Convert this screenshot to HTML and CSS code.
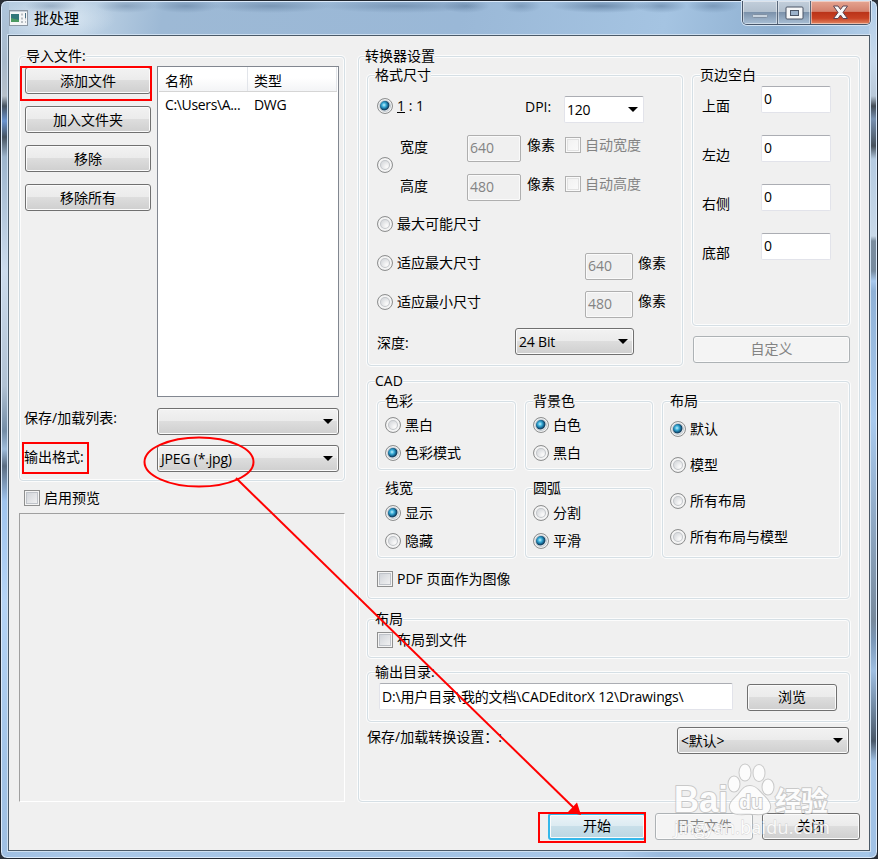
FILE: index.html
```html
<!DOCTYPE html>
<html lang="zh-CN">
  <head>
    <meta charset="UTF-8" />
    <meta name="viewport" content="width=device-width, initial-scale=1.0" />
    <title>批处理</title>

    <link rel="stylesheet" href="styles.css">
  </head>

  <body>
    <div class="window">
      <header class="titlebar">
        <svg class="app-icon" width="19" height="17" viewBox="0 0 19 17">
          <rect x="0.5" y="0.5" width="18" height="15" fill="#f4f6f7" stroke="#8b97a3" />
          <path d="M1 1.5h17" stroke="#c7d0d9" />
          <rect x="2" y="4" width="8" height="8" fill="#31777a" />
          <path d="M2 12V8l8 2v2z" fill="#4c9a62" />
          <path d="M12 4.5h2M12 8.5h2M12 12h2M16 8.5h1M16 12h1" stroke="#b9bfc4" stroke-width="2" />
          <path d="M16.500 3v5" stroke="#4a7184" />
        </svg>
        <h1 class="title">批处理</h1>
        <div class="controls">
          <span class="control min">
            <svg width="18" height="8"><rect x="1.500" y="1.500" width="15" height="3" rx="1" fill="#c8d3de" stroke="#8090a3" /></svg>
          </span>
          <span class="control max">
            <svg width="19" height="14"><rect x="1" y="1" width="17" height="12" rx="1" fill="#f5f6f7" stroke="#4b5566" /><rect x="5.500" y="4.500" width="8" height="5" fill="#9cb2cb" stroke="#4b5566" /></svg>
          </span>
          <span class="control close">
            <svg width="17" height="15" viewBox="0 0 17 15"><path d="M1.500 1h4.500l2.500 3.500L11 1h4.500L11 7.500l4.500 6H11L8.500 10 6 13.500H1.500L6 7.500z" fill="#f7f7f7" stroke="#5c4350" /></svg>
          </span>
        </div>
      </header>

      <main class="client">
        <div class="columns">
          <div class="left">
            <section class="group import">
              <h2 class="legend">导入文件:</h2>
              <div class="files">
                <div class="file-buttons">
                  <button class="btn">添加文件</button>
                  <button class="btn">加入文件夹</button>
                  <button class="btn">移除</button>
                  <button class="btn">移除所有</button>
                </div>
                <div class="list">
                  <div class="list-head"><span class="name">名称</span><span class="type">类型</span></div>
                  <div class="list-row"><span class="name">C:\Users\A...</span><span class="type">DWG</span></div>
                </div>
              </div>
              <div class="row list-preset">
                <span class="label">保存/加载列表:</span>
                <div class="combo"></div>
              </div>
              <div class="row out-format">
                <span class="label">输出格式:</span>
                <div class="combo">JPEG (*.jpg)</div>
              </div>
            </section>
            <label class="check preview-toggle"><input type="checkbox" />启用预览</label>
            <div class="preview"></div>
          </div>

          <section class="group settings">
            <h2 class="legend">转换器设置</h2>
            <div class="top">
              <section class="group format">
                <h3 class="legend">格式尺寸</h3>
                <div class="row dpi-row">
                  <label class="check"><input type="radio" name="size" checked /><span><u>1</u> : 1</span></label>
                  <span class="dpi">DPI:</span>
                  <div class="combo edit">120</div>
                </div>
                <div class="custom">
                  <input type="radio" name="size" />
                  <div class="custom-rows">
                    <div class="row">
                      <span class="label">宽度</span>
                      <input class="field" type="text" value="640" disabled />
                      <span class="unit">像素</span>
                      <label class="check disabled"><input type="checkbox" disabled />自动宽度</label>
                    </div>
                    <div class="row">
                      <span class="label">高度</span>
                      <input class="field" type="text" value="480" disabled />
                      <span class="unit">像素</span>
                      <label class="check disabled"><input type="checkbox" disabled />自动高度</label>
                    </div>
                  </div>
                </div>
                <div class="row max-row">
                  <label class="check"><input type="radio" name="size" />最大可能尺寸</label>
                </div>
                <div class="row fit-row fit-max">
                  <label class="check"><input type="radio" name="size" />适应最大尺寸</label>
                  <input class="field" type="text" value="640" disabled />
                  <span class="unit">像素</span>
                </div>
                <div class="row fit-row fit-min">
                  <label class="check"><input type="radio" name="size" />适应最小尺寸</label>
                  <input class="field" type="text" value="480" disabled />
                  <span class="unit">像素</span>
                </div>
                <div class="row depth-row">
                  <span class="label">深度:</span>
                  <div class="combo">24 Bit</div>
                </div>
              </section>

              <div class="side">
                <section class="group margins">
                  <h3 class="legend">页边空白</h3>
                  <div class="margin-row"><span>上面</span><input class="field" type="text" value="0" /></div>
                  <div class="margin-row"><span>左边</span><input class="field" type="text" value="0" /></div>
                  <div class="margin-row"><span>右侧</span><input class="field" type="text" value="0" /></div>
                  <div class="margin-row"><span>底部</span><input class="field" type="text" value="0" /></div>
                </section>
                <button class="btn custom-btn" disabled>自定义</button>
              </div>
            </div>

            <section class="group cad">
              <h3 class="legend">CAD</h3>
              <div class="cad-grid">
                <div class="group options">
                  <h4 class="legend">色彩</h4>
                  <label class="check"><input type="radio" name="color" />黑白</label>
                  <label class="check"><input type="radio" name="color" checked />色彩模式</label>
                </div>
                <div class="group options">
                  <h4 class="legend">背景色</h4>
                  <label class="check"><input type="radio" name="back" checked />白色</label>
                  <label class="check"><input type="radio" name="back" />黑白</label>
                </div>
                <div class="group options layouts">
                  <h4 class="legend">布局</h4>
                  <label class="check"><input type="radio" name="layout" checked />默认</label>
                  <label class="check"><input type="radio" name="layout" />模型</label>
                  <label class="check"><input type="radio" name="layout" />所有布局</label>
                  <label class="check"><input type="radio" name="layout" />所有布局与模型</label>
                </div>
                <div class="group options lower">
                  <h4 class="legend">线宽</h4>
                  <label class="check"><input type="radio" name="line" checked />显示</label>
                  <label class="check"><input type="radio" name="line" />隐藏</label>
                </div>
                <div class="group options lower">
                  <h4 class="legend">圆弧</h4>
                  <label class="check"><input type="radio" name="arc" />分割</label>
                  <label class="check"><input type="radio" name="arc" checked />平滑</label>
                </div>
              </div>
              <label class="check pdf"><input type="checkbox" />PDF 页面作为图像</label>
            </section>

            <section class="group to-file">
              <h3 class="legend">布局</h3>
              <label class="check"><input type="checkbox" />布局到文件</label>
            </section>

            <section class="group output">
              <h3 class="legend">输出目录:</h3>
              <input class="field path" type="text" value="D:\用户目录\我的文档\CADEditorX 12\Drawings\" />
              <button class="btn browse">浏览</button>
            </section>

            <div class="row preset">
              <span class="label">保存/加载转换设置：:</span>
              <div class="combo">&lt;默认&gt;</div>
            </div>
          </section>
        </div>

        <footer class="actions">
          <button class="btn start">开始</button>
          <button class="btn" disabled>日志文件</button>
          <button class="btn">关闭</button>
        </footer>
      </main>

      <!-- watermark -->
      <svg class="watermark" width="170" height="80" viewBox="0 0 170 80">
        <g fill="#fff" stroke="#c0c0c0" stroke-width="2" stroke-linejoin="round" paint-order="stroke">
          <text class="brand" x="4" y="52" font-size="36" textLength="54" lengthAdjust="spacingAndGlyphs">Bai</text>
          <ellipse cx="64" cy="24" rx="5.500" ry="7.500" />
          <ellipse cx="75" cy="12.500" rx="5.500" ry="8" />
          <ellipse cx="89" cy="13" rx="5.500" ry="8" />
          <ellipse cx="98" cy="27" rx="5.500" ry="7.500" />
          <path d="M80 26c6 0 9 5 13 9 4 4 8 8 7 13-2 8-11 6-20 6s-19 2-20-6c-1-5 4-9 8-13 4-5 6-9 12-9z" />
          <text class="cn" x="105" y="51" font-size="27" textLength="53">经验</text>
          <text class="du" x="69" y="49" font-size="20" textLength="24" lengthAdjust="spacingAndGlyphs">du</text>
        </g>
        <text class="url" x="4" y="74" font-size="18" textLength="156">jingyan.baidu.com</text>
      </svg>

      <!-- red marks -->
      <svg class="marks" width="878" height="859" viewBox="0 0 878 859">
        <g fill="none" stroke="#f00" stroke-width="2">
          <rect x="21" y="67" width="130" height="33" />
          <rect x="23" y="443" width="65" height="30" />
          <ellipse cx="199" cy="462" rx="54.500" ry="24.500" />
          <path d="M236 478L575 809" />
          <rect x="539" y="813" width="106" height="29" />
        </g>
        <path d="M581 815L577 802.500L568 812z" fill="#f00" />
      </svg>
    </div>
  </body>
</html>
```
FILE: styles.css
```css
* {
  margin: 0;
  padding: 0;
  box-sizing: border-box;
}
body {
  background: #2b3038;
  color: #000;
  font: 14px/20px "Open Sans", "Noto Sans CJK SC", sans-serif;
  overflow: hidden;
}
h1, h2, h3, h4, button, input {
  font: inherit;
  letter-spacing: inherit;
  color: inherit;
}

.window {
  position: relative;
  width: 878px;
  height: 859px;
  padding: 0 7px;
  border: 1px solid #20262f;
  border-radius: 7px;
  background:
    linear-gradient(#afc6dd 0, #a7b9cb 60px, #b7c1cb 95px, #465361 105px, #6b94cf 120px, #465361 136px, #9db5cd 156px, #cddced 270px, #b1c2d4 385px, #748da6 430px, #9fbcda 448px, #5b6d82 465px, #9fc4ee 500px, #b5d4f6 600px, #a2c4e8 760px, #9fbfe2) 0 0 / 8px 100% no-repeat,
    linear-gradient(#aecbe8 0, #c9daec 60px, #b9c9d9 95px, #424b55 105px, #7891b0 118px, #46515c 145px, #b5cbe1 158px, #c9d9e9 235px, #7b8d9f 240px, #778b9f 270px, #a8c9ee 280px, #8fb1d6 290px, #a9caee 420px, #77899c 620px, #7b98b8 640px, #9fbfe2 670px, #485768 740px, #a1c2e6 760px, #a1c2e6) 100% 0 / 8px 100% no-repeat,
    linear-gradient(90deg, #9fbfe2, #aac8e8 80px, #a1c2e4 400px, #aac9ea 620px, #9abadd 660px, #a6c8ea) 0 100% / 100% 9px no-repeat,
    radial-gradient(ellipse 26px 7px at 50px 5px, rgba(70, 100, 135, 0.35), transparent),
    radial-gradient(ellipse 30px 7px at 125px 5px, rgba(70, 100, 135, 0.35), transparent),
    radial-gradient(ellipse 34px 7px at 185px 5px, rgba(70, 100, 135, 0.4), transparent),
    radial-gradient(ellipse 60px 7px at 270px 5px, rgba(70, 100, 135, 0.4), transparent),
    radial-gradient(ellipse 80px 7px at 400px 5px, rgba(70, 100, 135, 0.4), transparent),
    radial-gradient(ellipse 24px 7px at 465px 5px, rgba(70, 100, 135, 0.4), transparent),
    radial-gradient(ellipse 20px 7px at 520px 5px, rgba(70, 100, 135, 0.35), transparent),
    radial-gradient(ellipse 50px 7px at 600px 5px, rgba(60, 90, 125, 0.5), transparent),
    radial-gradient(ellipse 26px 7px at 660px 5px, rgba(60, 90, 125, 0.4), transparent),
    radial-gradient(ellipse 26px 7px at 712px 5px, rgba(60, 90, 125, 0.35), transparent),
    radial-gradient(ellipse 60px 20px at 55px 18px, rgba(235, 243, 250, 0.6), transparent),
    linear-gradient(100deg, #b7cce0 0, #c0d4e6 8%, #9db9d5 16%, #9ab8d7 45%, #a5c4e2 65%, #8fb0d1 76%, #adcae6 84%, #b5cfe8);
  box-shadow: inset 0 0 0 1px #dceafa;
}
.titlebar {
  display: flex;
  height: 34px;
}
.app-icon {
  margin: 9px 0 0 1px;
}
.title {
  flex: 1;
  margin: 7px 0 0 6px;
  font-size: 15px;
}
.controls {
  display: flex;
  margin-right: -1px;
  height: 24px;
  border: 1px solid #48566a;
  border-top: 0;
  border-radius: 0 0 5px 5px;
  overflow: hidden;
  box-shadow: 0 0 0 1px #d4e3f2;
}
.control {
  display: flex;
  align-items: center;
  justify-content: center;
  width: 35px;
  border-right: 1px solid #58677a;
  background: linear-gradient(#c2cedb, #b1bfcd 48%, #7c92ab 50%, #a9bfd5);
  box-shadow: inset 0 0 0 1px rgba(255, 255, 255, 0.45);
}
.control.min {
  padding-top: 8px;
}
.control.max {
  width: 33px;
}
.control.close {
  width: 59px;
  border: 0;
  background: linear-gradient(#e5a592, #d4826e 45%, #bb3419 50%, #c84123 75%, #e28763);
}

.client {
  width: 862px;
  height: 816px;
  border: 1px solid #4b5a68;
  background: #f0f0f0;
  box-shadow: 0 0 0 1px #cfe0f1;
}
.columns {
  display: flex;
  gap: 13px;
  padding: 20px 0 0 10px;
}
.left {
  width: 326px;
}

.group {
  position: relative;
  border: 1px solid #d5dfe5;
  border-radius: 4px;
  box-shadow: 0 0 0 1px #fcfcfc, inset 0 0 0 1px #fcfcfc;
}
.legend {
  position: absolute;
  top: -11px;
  left: 7px;
  background: #f0f0f0;
  white-space: nowrap;
}

.btn {
  height: 27px;
  padding-bottom: 1px;
  border: 1px solid #707070;
  border-radius: 3px;
  background: linear-gradient(#f2f2f2, #ebebeb 48%, #dddddd 50%, #cfcfcf);
  box-shadow: inset 0 0 0 1px #fbfbfb;
  text-align: center;
}
.btn:disabled {
  border-color: #adb2b5;
  background: #f4f4f4;
  color: #838383;
}
.combo {
  position: relative;
  height: 27px;
  padding-left: 3px;
  border: 1px solid #707070;
  border-radius: 3px;
  background: linear-gradient(#f2f2f2, #ebebeb 48%, #dddddd 50%, #cfcfcf);
  box-shadow: inset 0 0 0 1px #fbfbfb;
  line-height: 26px;
  letter-spacing: -0.2px;
}
.combo::after {
  content: "";
  position: absolute;
  top: 10px;
  right: 5px;
  border: 5px solid transparent;
  border-top-color: #000;
  border-bottom: 0;
}
.field,
.combo.edit {
  height: 27px;
  border: 1px solid #e2e3ea;
  border-top-color: #abadb3;
  border-radius: 2px;
  background: #fff;
  box-shadow: none;
}
.field {
  padding: 0 2px 2px;
}
.field:disabled {
  border-color: #afafaf;
  background: #f0f0f0;
  box-shadow: inset 0 0 0 1px #fafafa;
  color: #838383;
}

input[type="radio"],
input[type="checkbox"] {
  appearance: none;
  flex: none;
  width: 16px;
  height: 16px;
  border: 1px solid #8e8f8f;
}
input[type="checkbox"] {
  background: linear-gradient(135deg, #cbcfd5, #f6f6f6);
  box-shadow: inset 0 0 0 1px #f4f4f4, inset 0 0 0 2px #bfc3c9;
}
input[type="checkbox"]:disabled {
  border-color: #b1b1b1;
  background: linear-gradient(135deg, #f0f0f0, #fbfbfb);
  box-shadow: inset 0 0 0 1px #fafafa, inset 0 0 0 2px #e2e2e2;
}
input[type="radio"] {
  border-radius: 50%;
  background: radial-gradient(circle at 9px 9px, #f8f8f8 1px, #dcdee1 6px);
  box-shadow: inset 0 0 0 2px #f4f4f4, inset 0 0 0 3px #c3c6ca;
}
input[type="radio"]:checked {
  background: radial-gradient(circle at 6px 6px, #c5f0fb 0, #3fb2dc 2px, #14638e 4px, #153b59 5px, transparent 6px), #eef1f3;
  box-shadow: inset 0 0 0 1px #f4f4f4, inset 0 0 0 2px #c3cbd1;
}
.check {
  display: flex;
  align-items: center;
  gap: 4px;
  height: 16px;
  white-space: nowrap;
}
.check.disabled {
  color: #838383;
}
.row {
  display: flex;
}

/* import files */
.import {
  height: 425px;
  padding: 10px 5px 0 5px;
}
.files {
  display: flex;
  gap: 6px;
}
.file-buttons {
  display: flex;
  flex-direction: column;
  gap: 12px;
  width: 126px;
}
.file-buttons .btn {
  padding-bottom: 0;
}
.list {
  width: 182px;
  height: 331px;
  margin-top: -1px;
  border: 1px solid #828790;
  background: #fff;
}
.list-head,
.list-row {
  display: flex;
  margin: 0 1px;
  height: 25px;
  line-height: 27px;
}
.list-row {
  line-height: 25px;
  letter-spacing: -0.35px;
}
.list-head {
  border-bottom: 1px solid #d5d5d5;
  background: linear-gradient(#fff 45%, #f3f4f6);
}
.list .name {
  width: 89px;
  padding-left: 6px;
}
.list .type {
  flex: 1;
  padding-left: 6px;
}
.list-head .name,
.list-head .type {
  border-right: 1px solid #e2e5ea;
}
.list-preset {
  margin-top: 11px;
}
.out-format {
  margin-top: 10px;
}
.import .label {
  width: 132px;
  margin-left: -1px;
}
.out-format .label {
  padding-top: 2px;
}
.import .combo {
  width: 182px;
  margin-left: 1px;
}
.preview-toggle {
  margin: 9px 0 0 5px;
}
.preview {
  height: 289px;
  margin-top: 7px;
  border: 1px solid #fff;
  border-top-color: #a0a0a0;
  border-left-color: #a0a0a0;
}

/* converter settings */
.settings {
  width: 502px;
  height: 746px;
  padding: 18px 9px 0 8px;
}
.settings > .legend,
.import > .legend {
  left: 6px;
}
.top {
  display: flex;
  gap: 9px;
}
.format {
  width: 316px;
  height: 291px;
  padding: 20px 0 0 9px;
}
.dpi-row .check {
  width: 148px;
  margin-top: 2px;
}
.dpi {
  width: 39px;
  margin-top: 1px;
}
.combo.edit {
  width: 80px;
  padding-left: 2px;
  line-height: 25px;
}
.custom {
  display: flex;
  align-items: center;
  gap: 7px;
  margin-top: 12px;
}
.custom > input {
  margin-top: -1px;
}
.custom-rows {
  display: flex;
  flex-direction: column;
  gap: 12px;
}
.custom .label {
  width: 67px;
  padding-top: 2px;
}
.custom .field {
  width: 54px;
}
.custom .unit {
  width: 44px;
  padding-left: 6px;
}
.custom .check {
  margin-top: 2px;
}
.custom > input {
  margin-top: -7px;
}
.max-row {
  margin-top: 15px;
}
.fit-row .check {
  width: 208px;
  margin-top: 2px;
}
.fit-row .field {
  width: 48px;
}
.fit-row .unit {
  padding-left: 5px;
}
.fit-max {
  margin-top: 21px;
}
.fit-min {
  margin-top: 11px;
}
.fit-min .check {
  margin-top: 3px;
}
.depth-row {
  margin-top: 10px;
}
.depth-row .label {
  width: 138px;
  padding-top: 5px;
}
.depth-row .combo {
  width: 119px;
}
.side {
  width: 158px;
}
.margins {
  height: 251px;
  padding: 10px 0 0 9px;
}
.margin-row {
  display: flex;
  height: 49px;
}
.margin-row span {
  width: 59px;
  padding-top: 10px;
}
.margin-row .field {
  width: 70px;
}
.custom-btn {
  width: 157px;
  height: 27px;
  margin: 10px 0 0 1px;
}

/* cad */
.cad {
  height: 218px;
  margin-top: 15px;
  padding: 19px 9px 0;
}
.cad-grid {
  display: grid;
  grid-template-columns: 139px 128px 179px;
  grid-template-rows: 69px 70px;
  column-gap: 9px;
  row-gap: 18px;
}
.options {
  display: flex;
  flex-direction: column;
  gap: 12px;
  padding: 15px 0 0 7px;
}
.lower {
  padding-top: 16px;
}
.layouts {
  grid-column: 3;
  grid-row: 1 / 3;
  gap: 20px;
  padding-top: 19px;
}
.pdf {
  margin-top: 13px;
}
.to-file {
  height: 39px;
  margin-top: 20px;
  padding: 12px 9px;
}
.output {
  display: flex;
  height: 50px;
  margin-top: 14px;
  padding: 10px 0 0 11px;
}
.path {
  width: 354px;
  letter-spacing: -0.15px;
}
.browse {
  width: 90px;
  margin: 1px 0 0 14px;
}
.preset {
  justify-content: space-between;
  margin-top: 5px;
  padding-right: 1px;
}
.preset .combo {
  width: 172px;
}

.actions {
  display: flex;
  justify-content: flex-end;
  gap: 9px;
  padding: 11px 9px 0 0;
}
.actions .btn {
  width: 98px;
}
.actions .start {
  border: 2px solid #35b8ea;
  background: linear-gradient(#eaf3f7, #dcebf2 48%, #c8dfe9 50%, #bcd7e3);
}

.marks,
.watermark {
  position: absolute;
  top: -1px;
  left: -1px;
}
.watermark {
  top: 759px;
  left: 669px;
  opacity: 0.8;
}
.brand,
.du {
  font-family: "Liberation Sans", sans-serif;
  font-weight: bold;
}
.cn {
  font-family: "Noto Sans CJK SC", sans-serif;
  font-weight: bold;
}
.url {
  fill: #fff;
  stroke: #ccc;
  stroke-width: 0.8px;
  paint-order: stroke;
}
```
